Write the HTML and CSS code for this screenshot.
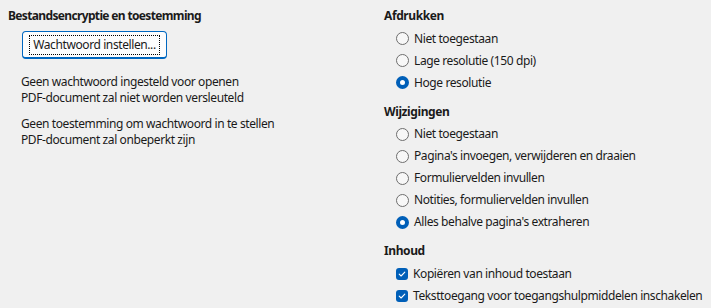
FILE: index.html
```html
<!DOCTYPE html>
<html lang="nl">
<head>
<meta charset="utf-8">
<link rel="stylesheet" href="styles.css">
</head>
<body>
<div class="page">
  <div class="col left">
    <div class="heading">Bestandsencryptie en toestemming</div>
    <div class="btn"><span class="focus">Wachtwoord instellen...</span></div>
    <p class="note">Geen wachtwoord ingesteld voor openen<br>PDF-document zal niet worden versleuteld</p>
    <p class="note">Geen toestemming om wachtwoord in te stellen<br>PDF-document zal onbeperkt zijn</p>
  </div>
  <div class="col right">
    <div class="group">
      <div class="heading">Afdrukken</div>
      <div class="row"><span class="radio"></span>Niet toegestaan</div>
      <div class="row"><span class="radio"></span>Lage resolutie (150 dpi)</div>
      <div class="row"><span class="radio on"></span>Hoge resolutie</div>
    </div>
    <div class="group">
      <div class="heading">Wijzigingen</div>
      <div class="row"><span class="radio"></span>Niet toegestaan</div>
      <div class="row"><span class="radio"></span>Pagina's invoegen, verwijderen en draaien</div>
      <div class="row"><span class="radio"></span>Formuliervelden invullen</div>
      <div class="row"><span class="radio"></span>Notities, formuliervelden invullen</div>
      <div class="row"><span class="radio on"></span>Alles behalve pagina's extraheren</div>
    </div>
    <div class="group">
      <div class="heading">Inhoud</div>
      <div class="row"><span class="check"><svg viewBox="0 0 12 12" width="12" height="12"><path d="M3.2 6.2 L5.1 8 L8.8 4.2" fill="none" stroke="#fff" stroke-width="1.1" stroke-linecap="round" stroke-linejoin="round"/></svg></span>Kopiëren van inhoud toestaan</div>
      <div class="row"><span class="check"><svg viewBox="0 0 12 12" width="12" height="12"><path d="M3.2 6.2 L5.1 8 L8.8 4.2" fill="none" stroke="#fff" stroke-width="1.1" stroke-linecap="round" stroke-linejoin="round"/></svg></span>Teksttoegang voor toegangshulpmiddelen inschakelen</div>
    </div>
  </div>
</div>
</body>
</html>
```

FILE: styles.css
```css
html, body {
  margin: 0;
  padding: 0;
  background: #f0f0f0;
}
body {
  font-family: "Noto Sans", "Liberation Sans", sans-serif;
  font-size: 12px;
  letter-spacing: -0.4px;
  line-height: 16px;
  color: #1a1a1a;
  width: 711px;
  height: 308px;
  overflow: hidden;
}
.page {
  display: flex;
  padding: 8px 0 0 8px;
}
.col.left {
  width: 376px;
  flex: none;
}
.col.right {
  display: flex;
  flex-direction: column;
  gap: 10px;
  white-space: nowrap;
  flex: none;
}
.heading {
  font-weight: 700;
  height: 16px;
}
.left .heading {
  letter-spacing: -0.65px;
}
.btn {
  margin: 7px 0 0 14px;
  width: 143px;
  height: 25px;
  border: 1px solid #0067c0;
  border-bottom-width: 2px;
  border-radius: 4px;
  background: #fdfdfd;
  box-sizing: content-box;
  display: flex;
  align-items: center;
  justify-content: center;
}
.focus {
  border: 1px dotted #000;
  padding: 1px 3px;
  line-height: 16px;
}
.note {
  margin: 0;
  padding-left: 13px;
  line-height: 15.5px;
}
.btn + .note {
  margin-top: 15px;
}
.note + .note {
  margin-top: 11px;
}
.group {
  display: flex;
  flex-direction: column;
}
.group .heading {
  margin-bottom: 3.5px;
}
.row {
  height: 22px;
  display: flex;
  align-items: center;
  padding-left: 12px;
  gap: 5px;
}
.radio {
  width: 11px;
  height: 11px;
  border: 1px solid #6e6e6e;
  border-radius: 50%;
  background: #f7f7f7;
  flex: none;
}
.radio.on {
  width: 5px;
  height: 5px;
  border: 4px solid #005fb8;
  background: #fff;
}
.check {
  width: 12px;
  height: 12px;
  border-radius: 3px;
  background: #005fb8;
  flex: none;
  display: flex;
}
```
